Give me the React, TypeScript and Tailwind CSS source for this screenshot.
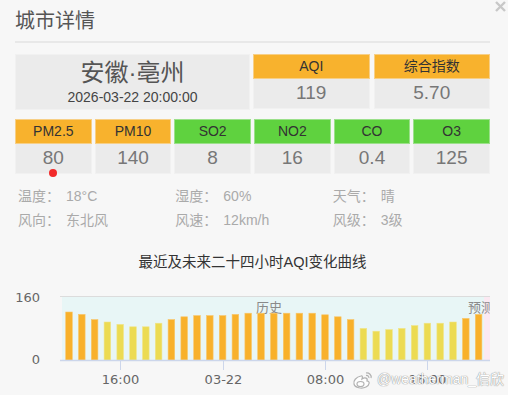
import React from 'react';

const CJK = "font-['Liberation_Sans','Noto_Sans_CJK_SC',sans-serif]";

interface Metric {
  name: string;
  value: string;
  level: 'orange' | 'green';
}

const pollutants: Metric[] = [
  { name: 'PM2.5', value: '80', level: 'orange' },
  { name: 'PM10', value: '140', level: 'orange' },
  { name: 'SO2', value: '8', level: 'green' },
  { name: 'NO2', value: '16', level: 'green' },
  { name: 'CO', value: '0.4', level: 'green' },
  { name: 'O3', value: '125', level: 'green' },
];

// hourly AQI, 24h history + forecast
const aqiSeries = [
  120, 114, 101, 95, 89, 83, 83, 92, 101, 108, 111, 111, 111, 114, 117, 117, 117,
  117, 117, 117, 113, 108, 101, 79, 72, 76, 79, 86, 92, 92, 95, 104, 114,
];

function MetricCard({ name, value, level, dot }: Metric & { dot?: boolean }) {
  return (
    <div className="relative flex flex-col">
      <div
        className={`h-[25px] flex items-center justify-center text-[14px] text-[#333] border ${
          level === 'orange' ? 'bg-[#f8b22d] border-[#f7cf86]' : 'bg-[#5fd23f] border-[#9be08a]'
        }`}
      >
        {name}
      </div>
      <div className="h-[30px] flex items-center justify-center bg-[#ebebeb] border border-t-0 border-[#f1f1f1] text-[19px] text-[#777]">
        {value}
      </div>
      {dot && (
        <span className="absolute left-1/2 -translate-x-1/2 bottom-[-3px] w-[8px] h-[8px] rounded-full bg-[#f22a2a]" />
      )}
    </div>
  );
}

function InfoItem({ label, value }: { label: string; value: string }) {
  return (
    <div className="flex">
      <span className="w-[48px] text-[#aaa]">{label}</span>
      <span className="text-[#aaa]">{value}</span>
    </div>
  );
}

function AqiChart() {
  const base = 79;
  const scale = 0.4;
  const x0 = 69;
  const step = 12.8;
  const ticks = [
    { i: 4, label: '16:00' },
    { i: 12, label: '03-22' },
    { i: 20, label: '08:00' },
    { i: 28, label: '16:00' },
  ];

  return (
    <svg width="508" height="112" className="block">
      <defs>
        <clipPath id="plot">
          <rect x="60" y="10" width="430" height="70" />
        </clipPath>
      </defs>
      <rect x="62" y="16" width="422" height="63" fill="#e8f6f6" />
      <rect x="484" y="16" width="6" height="63" fill="#fbe9f2" />
      <line x1="60" y1="15.5" x2="490" y2="15.5" stroke="#dcdcdc" />
      <g clipPath="url(#plot)" fontFamily="Noto Sans CJK SC, sans-serif" fontSize="13" fill="#8a8a8a">
        <text x="256" y="31">历史</text>
        <text x="468" y="31">预测</text>
      </g>
      {aqiSeries.map((v, i) => {
        const h = v * scale;
        const cx = x0 + step * i;
        return (
          <rect
            key={i}
            x={cx - 3.3}
            y={base - h}
            width="6.6"
            height={h}
            fill={v > 100 ? '#f8b12b' : '#ecdb52'}
            stroke={v > 100 ? '#f9c66a' : '#f1e48a'}
            strokeWidth="0.6"
          />
        );
      })}
      <line x1="60" y1="79.5" x2="490" y2="79.5" stroke="#ccd6eb" strokeWidth="1.5" />
      {ticks.map(t => {
        const x = Math.round(x0 + step * t.i) + 0.5;
        return (
          <g key={t.i}>
            <line x1={x} y1="80" x2={x} y2="89" stroke="#ccd6eb" />
            <text x={x} y="103" textAnchor="middle" fontFamily="DejaVu Sans, sans-serif" fontSize="13" fill="#666">
              {t.label}
            </text>
          </g>
        );
      })}
      <text x="40" y="21" textAnchor="end" fontFamily="DejaVu Sans, sans-serif" fontSize="13" fill="#666">
        160
      </text>
      <text x="40" y="83" textAnchor="end" fontFamily="DejaVu Sans, sans-serif" fontSize="13" fill="#666">
        0
      </text>
    </svg>
  );
}

function WeiboMark() {
  return (
    <svg width="22" height="20" viewBox="0 0 22 20" className="shrink-0">
      <g fill="#fff" stroke="#aaa" strokeWidth="1.2">
        <path d="M9 6 C4 7 1 11 2 14 C3 18 10 19 14 17 C18 15 18 11 15 11 C16 8 13 7 10 9 C11 6 10 5.5 9 6 Z" />
        <ellipse cx="8.5" cy="14" rx="3.5" ry="2.5" />
        <path d="M14 3 C17 2.5 20 5 19 8" fill="none" />
        <path d="M14 5.5 C16 5.2 17.2 6.5 16.8 8" fill="none" />
      </g>
    </svg>
  );
}

export default function App() {
  return (
    <div className={`relative w-[508px] h-[395px] bg-[#f7f7f7] overflow-hidden ${CJK}`}>
      {/* close */}
      <svg width="11" height="11" viewBox="0 0 11 11" className="absolute right-[2px] top-[1px]">
        <path d="M1 1 L10 10 M10 1 L1 10" stroke="#c8c8c8" strokeWidth="2.4" />
      </svg>

      <div className="px-[15px] pr-[18px]">
        {/* header */}
        <div className="h-[43px] pt-[7px] border-b-2 border-[#e8e8e8] text-[20px] text-[#555] leading-[28px]">
          城市详情
        </div>

        {/* city + aqi */}
        <div className="flex gap-[3px] mt-[11px]">
          <div className="w-[235px] h-[56px] bg-[#ebebeb] border border-[#f1f1f1] flex flex-col items-center justify-center">
            <div className="text-[24px] leading-[30px] text-[#555]">安徽·亳州</div>
            <div className="text-[14px] leading-[18px] text-[#444]">2026-03-22 20:00:00</div>
          </div>
          <div className="flex-1">
            <MetricCard name="AQI" value="119" level="orange" />
          </div>
          <div className="flex-1 ml-[1px]">
            <MetricCard name="综合指数" value="5.70" level="orange" />
          </div>
        </div>

        {/* pollutants */}
        <div className="grid grid-cols-6 gap-[3px] mt-[9px]">
          {pollutants.map((p, i) => (
            <MetricCard key={p.name} {...p} dot={i === 0} />
          ))}
        </div>

        {/* weather info */}
        <div className="grid grid-cols-3 gap-y-[6px] mt-[13px] pl-[3px] text-[14px] leading-[18px]">
          <InfoItem label="温度：" value="18°C" />
          <InfoItem label="湿度：" value="60%" />
          <InfoItem label="天气：" value="晴" />
          <InfoItem label="风向：" value="东北风" />
          <InfoItem label="风速：" value="12km/h" />
          <InfoItem label="风级：" value="3级" />
        </div>

        <div className="mt-[23px] text-center text-[14.5px] leading-[20px] text-[#333]">
          最近及未来二十四小时AQI变化曲线
        </div>
      </div>

      <div className="mt-[9px]">
        <AqiChart />
      </div>

      {/* watermark */}
      <div className="absolute left-[352px] top-[369px] flex items-center gap-[3px] text-[14px] text-white opacity-90 [text-shadow:0_0_1px_#888,0_0_1px_#888]">
        <WeiboMark />
        <span>@weatherman_信欣</span>
      </div>
    </div>
  );
}
